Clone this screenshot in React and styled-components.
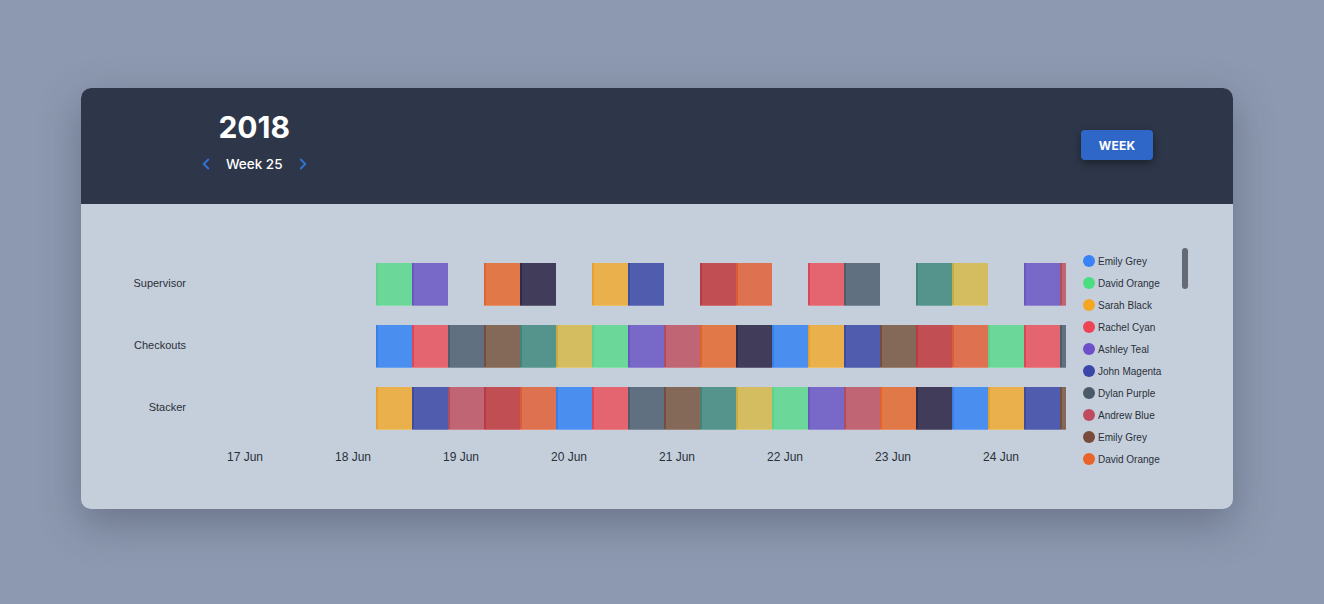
import React from "react";
import styled, { createGlobalStyle } from "styled-components";
import { ChevronLeft, ChevronRight } from "lucide-react";

const GlobalStyle = createGlobalStyle`
  html, body {
    margin: 0;
    padding: 0;
    background: #8d99b0;
    font-family: "Liberation Sans", Arial, sans-serif;
  }
`;

const palette = {
  green: ["#6bd89a", "#60d08e"],
  purple: ["#7868c8", "#6a58c0"],
  orange: ["#e07848", "#e0642c"],
  dark: ["#403c5a", "#302c48"],
  amber: ["#e9b04c", "#e4a030"],
  indigo: ["#505cae", "#404ca0"],
  red: ["#c04e52", "#b83c44"],
  coral: ["#de7250", "#dc5c34"],
  pink: ["#e46470", "#d84858"],
  slate: ["#607080", "#505e6c"],
  teal: ["#54948c", "#448478"],
  yellow: ["#d4bc60", "#c8ac40"],
  blue: ["#4a8ef0", "#3a7ee8"],
  brown: ["#846858", "#744e40"],
  rose: ["#bf6574", "#b04c60"],
};

const rows = [
  {
    label: "Supervisor",
    blocks: [
      "green", "purple", null, "orange", "dark", null, "amber", "indigo", null,
      "red", "coral", null, "pink", "slate", null, "teal", "yellow", null,
      "purple", "rose",
    ],
  },
  {
    label: "Checkouts",
    blocks: [
      "blue", "pink", "slate", "brown", "teal", "yellow", "green", "purple",
      "rose", "orange", "dark", "blue", "amber", "indigo", "brown", "red",
      "coral", "green", "pink", "slate",
    ],
  },
  {
    label: "Stacker",
    blocks: [
      "amber", "indigo", "rose", "red", "coral", "blue", "pink", "slate",
      "brown", "teal", "yellow", "green", "purple", "rose", "orange", "dark",
      "blue", "amber", "indigo", "brown",
    ],
  },
];

const days = ["17 Jun", "18 Jun", "19 Jun", "20 Jun", "21 Jun", "22 Jun", "23 Jun", "24 Jun"];

const people = [
  ["Emily Grey", "#3b82f6"],
  ["David Orange", "#4ade80"],
  ["Sarah Black", "#f5a623"],
  ["Rachel Cyan", "#ef4455"],
  ["Ashley Teal", "#6d4fc9"],
  ["John Magenta", "#3a46a8"],
  ["Dylan Purple", "#4b5a68"],
  ["Andrew Blue", "#c04a60"],
  ["Emily Grey", "#7a4a3a"],
  ["David Orange", "#e8642a"],
  ["Sarah Black", "#d94050"],
];

export default function App() {
  return (
    <>
      <GlobalStyle />
      <Page>
        <Card>
          <Header>
            <TitleBlock>
              <Year>2018</Year>
              <WeekNav>
                <NavButton aria-label="previous week">
                  <ChevronLeft size={18} strokeWidth={2.6} />
                </NavButton>
                <WeekLabel>Week 25</WeekLabel>
                <NavButton aria-label="next week">
                  <ChevronRight size={18} strokeWidth={2.6} />
                </NavButton>
              </WeekNav>
            </TitleBlock>
            <ViewButton>WEEK</ViewButton>
          </Header>
          <Body>
            <Chart>
              {rows.map((row) => (
                <React.Fragment key={row.label}>
                  <RowLabel>{row.label}</RowLabel>
                  <Lane>
                    {row.blocks.map((c, i) =>
                      c ? (
                        <Block key={i} $fill={palette[c][0]} $edge={palette[c][1]} />
                      ) : (
                        <Spacer key={i} />
                      )
                    )}
                  </Lane>
                </React.Fragment>
              ))}
              <span />
              <Axis>
                {days.map((d) => (
                  <Tick key={d}>{d}</Tick>
                ))}
              </Axis>
            </Chart>
            <Legend>
              {people.map(([name, color], i) => (
                <LegendItem key={i}>
                  <Dot $color={color} />
                  {name}
                </LegendItem>
              ))}
            </Legend>
            <Scrollbar />
          </Body>
        </Card>
      </Page>
    </>
  );
}

const Page = styled.div`
  min-height: 604px;
  box-sizing: border-box;
  padding: 88px 0 0 81px;
`;

const Card = styled.div`
  width: 1152px;
  border-radius: 10px;
  overflow: hidden;
  background: #c5cfdc;
  box-shadow: 0 14px 40px rgba(40, 50, 70, 0.35);
`;

const Header = styled.div`
  height: 116px;
  background: #2e374a;
  display: flex;
  align-items: center;
  justify-content: space-between;
  padding: 0 80px 0 116px;
`;

const TitleBlock = styled.div`
  display: flex;
  flex-direction: column;
  align-items: center;
  gap: 10px;
  margin-top: -10px;
`;

const Year = styled.div`
  font-family: Inter, "Liberation Sans", sans-serif;
  font-size: 30px;
  font-weight: 700;
  color: #ffffff;
  line-height: 36px;
`;

const WeekNav = styled.div`
  display: flex;
  align-items: center;
  gap: 11px;
`;

const NavButton = styled.button`
  border: none;
  background: transparent;
  padding: 0;
  width: 18px;
  height: 18px;
  display: flex;
  color: #3270d4;
`;

const WeekLabel = styled.span`
  font-family: Inter, "Liberation Sans", sans-serif;
  font-size: 13.5px;
  font-weight: 500;
  color: #ffffff;
`;

const ViewButton = styled.button`
  width: 72px;
  height: 30px;
  border: none;
  border-radius: 4px;
  background: #2f67c8;
  color: #ffffff;
  font-family: Inter, "Liberation Sans", sans-serif;
  font-size: 12px;
  font-weight: 700;
  letter-spacing: 0.2px;
  box-shadow: 0 3px 8px rgba(0, 0, 0, 0.45);
  margin-top: -2px;
`;

const Body = styled.div`
  height: 305px;
  box-sizing: border-box;
  display: flex;
  align-items: flex-start;
  padding: 44px 0 0 40px;
`;

const Chart = styled.div`
  display: grid;
  grid-template-columns: 65px 875px;
  grid-auto-rows: 43px;
  column-gap: 5px;
  row-gap: 19px;
  margin-top: 15px;
`;

const RowLabel = styled.div`
  display: flex;
  align-items: center;
  justify-content: flex-end;
  padding-bottom: 3px;
  font-size: 11px;
  color: #2a2f38;
`;

const Lane = styled.div`
  display: flex;
  overflow: hidden;
  padding-left: 185px;
`;

const Block = styled.div`
  flex: 0 0 36px;
  height: 43px;
  box-sizing: border-box;
  background: ${(p) => p.$fill};
  box-shadow: inset 2px 0 0 ${(p) => p.$edge};
  border-bottom: 1px solid rgba(255, 255, 255, 0.18);
`;

const Spacer = styled.div`
  flex: 0 0 36px;
`;

const Axis = styled.div`
  display: flex;
  align-self: start;
`;

const Tick = styled.div`
  flex: 0 0 108px;
  text-align: center;
  font-size: 12px;
  line-height: 16px;
  color: #2a2f38;
`;

const Legend = styled.div`
  width: 92px;
  height: 223px;
  margin: 2px 0 0 17px;
  overflow: hidden;
  display: flex;
  flex-direction: column;
`;

const LegendItem = styled.div`
  flex: 0 0 22px;
  display: flex;
  align-items: center;
  gap: 3px;
  font-size: 10px;
  color: #2a2f38;
  white-space: nowrap;
`;

const Dot = styled.span`
  width: 12px;
  height: 12px;
  border-radius: 50%;
  background: ${(p) => p.$color};
  flex-shrink: 0;
`;

const Scrollbar = styled.div`
  width: 6px;
  height: 41px;
  margin-left: 7px;
  border-radius: 3px;
  background: #656b74;
`;
